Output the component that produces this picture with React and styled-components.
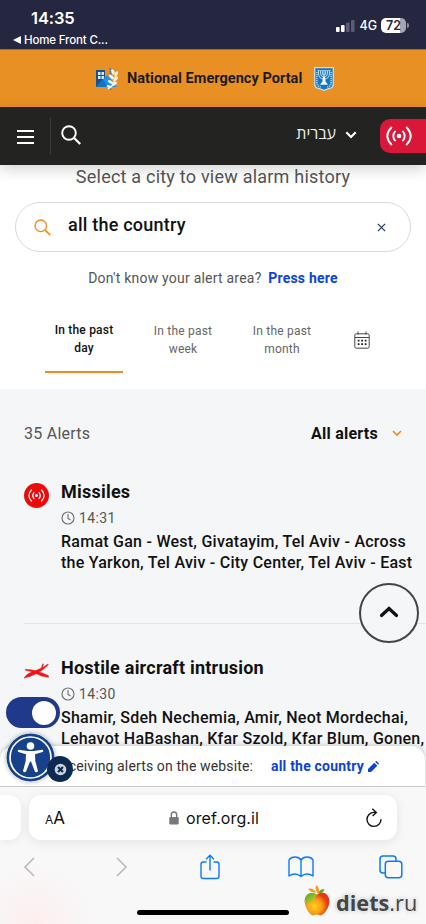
import styled, { createGlobalStyle } from 'styled-components'

const ORANGE = '#f28a1c'
const BLUE = '#0d42da'
const NAVY = '#21398b'
const IOS_BLUE = '#0a7aff'

const alerts = [
	{
		id: 1,
		type: 'missiles',
		title: 'Missiles',
		time: '14:31',
		lines: ['Ramat Gan - West, Givatayim, Tel Aviv - Across', 'the Yarkon, Tel Aviv - City Center, Tel Aviv - East']
	},
	{
		id: 2,
		type: 'aircraft',
		title: 'Hostile aircraft intrusion',
		time: '14:30',
		lines: ['Shamir, Sdeh Nechemia, Amir, Neot Mordechai,', 'Lehavot HaBashan, Kfar Szold, Kfar Blum, Gonen,']
	}
]

const ranges = [
	{ label: 'In the past', unit: 'day', active: true },
	{ label: 'In the past', unit: 'week' },
	{ label: 'In the past', unit: 'month' }
]

export default function App () {
	return (
		<Screen>
			<GlobalStyle />
			<StatusBar />
			<PortalBanner>
				<HomeFrontLogo />
				<BannerTitle>National Emergency Portal</BannerTitle>
				<StateEmblem />
			</PortalBanner>
			<NavBar />
			<Page>
				<Heading>Select a city to view alarm history</Heading>
				<SearchBox>
					<SearchIcon size={17} color={ORANGE} width={1.6} />
					<SearchValue>all the country</SearchValue>
					<svg width='9' height='9' viewBox='0 0 10 10'>
						<path d='M1 1l8 8M9 1L1 9' stroke='#1d3a5f' strokeWidth='1.3' />
					</svg>
				</SearchBox>
				<Hint>
					Don't know your alert area? <HintLink>Press here</HintLink>
				</Hint>
				<Tabs>
					{ranges.map(r => (
						<Tab key={r.unit} $active={r.active}>{r.label}<br />{r.unit}</Tab>
					))}
					<CalendarIcon />
				</Tabs>
				<Results>
					<ResultsHeader>
						<Count>35 Alerts</Count>
						<Filter>All alerts</Filter>
						<svg width='10' height='7' viewBox='0 0 10 7'>
							<path d='M1 1l4 4 4-4' fill='none' stroke={ORANGE} strokeWidth='1.6' />
						</svg>
					</ResultsHeader>
					{alerts.map(alert => <AlertItem key={alert.id} alert={alert} />)}
				</Results>
				<UpButton>
					<svg width='20' height='13' viewBox='0 0 20 13'>
						<path d='M2.5 10.5L10 3.5l7.5 7' fill='none' stroke='#111' strokeWidth='3.2' strokeLinecap='round' />
					</svg>
				</UpButton>
				<Receiving>
					<ReceivingText>Receiving alerts on the website:</ReceivingText>
					<ReceivingLink>all the country</ReceivingLink>
					<svg width='11' height='11' viewBox='0 0 11 11' fill={BLUE}>
						<path d='M0 8 6.3 1.7 9.300 4.700 3 11H0zM7.200.9l.6-.6q.5-.5 1 0l1.900 1.900q.5.5 0 1l-.6.6z' />
					</svg>
				</Receiving>
				<Toggle><Knob /></Toggle>
				<AccessButton><PersonIcon /></AccessButton>
				<CloseBadge>
					<svg width='13' height='13' viewBox='0 0 13 13'>
						<circle cx='6.5' cy='6.5' r='5.8' fill='#fff' opacity='.8' />
						<path d='M4 4l5 5M9 4l-5 5' stroke='#0d2b50' strokeWidth='2.2' />
					</svg>
				</CloseBadge>
			</Page>
			<BrowserBar />
		</Screen>
	)
}

function StatusBar () {
	return (
		<Status>
			<StatusLeft>
				<Clock>14:35</Clock>
				<BackLink>
					<svg width='8' height='8' viewBox='0 0 8 8'><path d='M0 4l8-4v8z' fill='#fff' /></svg>
					Home Front C...
				</BackLink>
			</StatusLeft>
			<StatusRight>
				<svg width='20' height='14' viewBox='0 0 20 14' fill='#fff'>
					<rect x='1' y='8' width='3.6' height='5' rx='1' />
					<rect x='6' y='6' width='3.6' height='7' rx='1' />
					<rect x='11' y='3.5' width='3.6' height='9.5' rx='1' opacity='.25' />
					<rect x='16' y='1' width='3.6' height='12' rx='1' opacity='.25' />
				</svg>
				<Network>4G</Network>
				<Battery>72</Battery>
				<BatteryTip />
			</StatusRight>
		</Status>
	)
}

function NavBar () {
	return (
		<Nav>
			<Burger><i /><i /><i /></Burger>
			<NavDivider />
			<SearchIcon size={20} color='#fff' width={1.9} />
			<Language lang='he'>עברית</Language>
			<svg width='12' height='8' viewBox='0 0 12 8'>
				<path d='M1.3 1.3L6 6l4.7-4.7' fill='none' stroke='#fff' strokeWidth='2.1' />
			</svg>
			<LiveButton><SignalIcon width={26} /></LiveButton>
		</Nav>
	)
}

function AlertItem ({ alert }) {
	return (
		<Item>
			<IconCell>
				{alert.type === 'missiles'
					? <MissileDot><SignalIcon width={17} /></MissileDot>
					: <AircraftIcon />}
			</IconCell>
			<div>
				<ItemTitle>{alert.title}</ItemTitle>
				<ItemTime>
					<svg width='14' height='14' viewBox='0 0 14 14' fill='none' stroke='#777' strokeWidth='1.2'>
						<circle cx='7' cy='7' r='6' />
						<path d='M7 3v4.3l2.5 1.6' />
					</svg>
					{alert.time}
				</ItemTime>
				{alert.lines.map(line => <Cities key={line}>{line}</Cities>)}
			</div>
		</Item>
	)
}

function BrowserBar () {
	return (
		<Browser>
			<AddressRow>
				<PreviousTab />
				<Address>
					<TextSize><small>A</small>A</TextSize>
					<Site>
						<svg width='10' height='14' viewBox='0 0 10 14'>
							<path d='M2.3 7V4a2.7 3 0 0 1 5.4 0v3' fill='none' stroke='#77777c' strokeWidth='1.4' />
							<rect x='.3' y='6' width='9.4' height='7.6' rx='1.3' fill='#77777c' />
						</svg>
						oref.org.il
					</Site>
					<svg width='18' height='20' viewBox='0 0 18 20' fill='none' stroke='#111' strokeWidth='1.4'>
						<path d='M11 4.4H9A7 7 0 1 0 16 11.3M7.3.8l4 3.6L7.6 8' />
					</svg>
				</Address>
				<NextTab />
			</AddressRow>
			<Toolbar>
				<ToolButton>
					<svg width='12' height='20' viewBox='0 0 12 20' fill='none' stroke='#b9b9bd' strokeWidth='1.6'>
						<path d='M11 1L2 10l9 9' />
					</svg>
				</ToolButton>
				<ToolButton $shift={2}>
					<svg width='12' height='20' viewBox='0 0 12 20' fill='none' stroke='#b9b9bd' strokeWidth='1.6'>
						<path d='M1 1l9 9-9 9' />
					</svg>
				</ToolButton>
				<ToolButton>
					<svg width='20' height='26' viewBox='0 0 20 26' fill='none' stroke={IOS_BLUE} strokeWidth='1.4'>
						<path d='M6.5 8H3.2Q1 8 1 10.2v12Q1 24.5 3.2 24.5h13.6q2.2 0 2.2-2.3v-12Q19 8 16.800 8h-3.300M10 16.500V1.500M6 5.300l4-4 4 4' />
					</svg>
				</ToolButton>
				<ToolButton>
					<svg width='26' height='22' viewBox='0 0 26 22' fill='none' stroke={IOS_BLUE} strokeWidth='1.4' strokeLinejoin='round'>
						<path d='M13 20.5V4Q11 1 7 1T1 3.8V20q3-2 6-2t6 2.5q3-2.5 6-2.5t6 2V3.8Q23 1 19 1t-6 3' />
					</svg>
				</ToolButton>
				<ToolButton>
					<svg width='24' height='24' viewBox='0 0 24 24' fill='none' stroke={IOS_BLUE} strokeWidth='1.5'>
						<path d='M6 18H4Q1 18 1 15V4Q1 1 4 1h10q3 0 3 3v2' />
						<rect x='6.3' y='6.3' width='16.5' height='16.5' rx='3' />
					</svg>
				</ToolButton>
			</Toolbar>
			<HomeIndicator />
			<Watermark>
				<AppleIcon />
				<WatermarkText><b>diets</b>.ru</WatermarkText>
			</Watermark>
		</Browser>
	)
}

function SearchIcon ({ size, color, width }) {
	return (
		<svg width={size} height={size} viewBox='0 0 20 20' fill='none' stroke={color} strokeWidth={width}>
			<circle cx='8' cy='8' r='6.8' />
			<path d='M12.8 12.8l6.4 6.2' strokeWidth={width * 1.2} />
		</svg>
	)
}

function SignalIcon ({ width }) {
	return (
		<svg width={width} height={width * 20 / 26} viewBox='0 0 26 20' fill='none' stroke='#fff' strokeWidth='1.9' strokeLinecap='round'>
			<circle cx='13' cy='10' r='2.3' fill='#fff' stroke='none' />
			<path d='M9 5.5q-3.4 4.5 0 9M17 5.5q3.4 4.5 0 9M5.3 1.5q-8 8.5 0 17M20.7 1.5q8 8.5 0 17' />
		</svg>
	)
}

function CalendarIcon () {
	return (
		<Calendar width='16' height='18' viewBox='0 0 16 18' fill='none' stroke='#444' strokeWidth='1'>
			<rect x='.8' y='2.8' width='14.4' height='14.4' rx='1.5' />
			<path d='M1 6.5h14M4 .5v3M12 .5v3' />
			<path d='M3.7 9.700h9M3.7 13.2h9' stroke='#222' strokeWidth='1.7' strokeDasharray='1.8 1.7' />
		</Calendar>
	)
}

function HomeFrontLogo () {
	return (
		<svg width='22' height='24' viewBox='0 0 22 24'>
			<path d='M0 3h9v17H0z' fill='#17528c' />
			<path d='M2 5h6v7H2z' fill='#dceaf5' />
			<path d='M5 5v7M2 8.5h6' stroke='#17528c' />
			<path d='M0 20L11 8l10 12z' fill='#1796f2' />
			<path d='M0 20L7 12l5 8z' fill='#1673c4' />
			<path d='M14.5 1v22' stroke='#5f83a5' strokeWidth='2' />
			<path d='M12 22q7-3 8-17' fill='none' stroke='#eef1f4' strokeWidth='1.5' />
			<g fill='#f4f3f0'>
				<ellipse cx='17' cy='5' rx='1.5' ry='3' transform='rotate(-25 17 5)' />
				<ellipse cx='20.5' cy='7' rx='1.2' ry='3' transform='rotate(25 20.5 7)' />
				<ellipse cx='15.5' cy='10' rx='1.5' ry='3.2' transform='rotate(-45 15.5 10)' />
				<ellipse cx='20' cy='12' rx='1.3' ry='3' transform='rotate(40 20 12)' />
				<ellipse cx='14.5' cy='15' rx='1.4' ry='3' transform='rotate(-60 14.5 15)' />
				<ellipse cx='18.5' cy='17' rx='1.3' ry='3' transform='rotate(55 18.5 17)' />
				<ellipse cx='13' cy='19.5' rx='1.2' ry='2.6' transform='rotate(-70 13 19.5)' />
			</g>
		</svg>
	)
}

function StateEmblem () {
	return (
		<svg width='20' height='24' viewBox='0 0 20 24'>
			<path d='M.7.7h18.6v16q0 4-4 4.800L10 23.300l-5.300-1.800q-4-.8-4-4.800z' fill='#1478bd' stroke='#c7dcea' strokeWidth='1.3' />
			<path d='M2.8 5v10q0 4 4 5M17.2 5v10q0 4-4 5' fill='none' stroke='#8cc0e2' strokeWidth='2' strokeDasharray='1.3 .7' />
			<g fill='none' stroke='#e6f1f8' strokeWidth='.8'>
				<path d='M4.5 4v2q0 6 5.5 6t5.5-6V4M6.5 4v2q0 4 3.5 4t3.5-4V4M8.3 4v2q0 2 1.7 2t1.7-2V4M10 3.5v13' />
			</g>
			<path d='M9 10h2l.6 4.5 2.4 3.3H6l2.400-3.300z' fill='#eef5fa' />
			<path d='M3.5 3.5h13' stroke='#d6e8f4' strokeDasharray='1.2 .8' />
		</svg>
	)
}

function AircraftIcon () {
	return (
		<svg width='25' height='16' viewBox='0 0 25 16' fill='#f01414' stroke='#f01414' strokeWidth='.4'>
			<path d='M.2 14.8Q2 11.2 9 8.600q5-1.800 8.200-3.600L18.700.7l.8.300-1 3.700 5.300-3.700.6.7-5.600 5Q12 11.200 6 13.400q-3.500.6-5.800 1.900z' />
			<path d='M1.3 6.300q6 .1 11 1.700 7 2 12.200 4.700v1.700q-7-.7-12.200-3.700T1.300 7.200z' />
		</svg>
	)
}

function PersonIcon () {
	return (
		<svg width='49' height='49' viewBox='0 0 49 49'>
			<circle cx='24.5' cy='24.5' r='24' fill='#17418d' />
			<circle cx='24.5' cy='24.5' r='20.5' fill='none' stroke='#fff' strokeWidth='1.7' />
			<circle cx='24.5' cy='13' r='3.8' fill='#fff' />
			<path d='M12.5 16.8l9 1.3h6l9-1.3q1.5 1.2 0 2.3l-7.500 2.200.3 6.700 2.700 10q-.7 2-3 .8l-4-10.300h-1l-4 10.300q-2.300 1.200-3-.8l2.700-10 .3-6.700-7.500-2.200q-1.500-1.100 0-2.300z' fill='#fff' />
		</svg>
	)
}

function AppleIcon () {
	return (
		<svg width='26' height='33' viewBox='0 0 27 33'>
			<defs>
				<radialGradient id='apple' cx='.38' cy='.6' r='.65'>
					<stop offset='0' stopColor='#ffd21c' />
					<stop offset='.5' stopColor='#f99a15' />
					<stop offset='.85' stopColor='#e23a16' />
				</radialGradient>
				<linearGradient id='green' x1='0' y1='0' x2='.8' y2='1'>
					<stop offset='0' stopColor='#4fa52b' />
					<stop offset='1' stopColor='#c5d32a' />
				</linearGradient>
			</defs>
			<path d='M13.5 10.5Q19 6 24 10.5q4.500 5.500 1 13T17 32q-3-1-3.500-1T9 32Q4 30 1.500 22T4 10Q9 7 13.500 10.500z' fill='url(#apple)' />
			<path d='M1.2 19Q0 13 4 10q5-3 9.500.5Q10 18 1.200 20z' fill='url(#green)' />
			<path d='M14 9.500Q11 4 12.500.3q4 3 3 9zM12.500 8Q8 9 4 4.500q5-1.500 8.500 3.500z' fill='#f59b1e' />
			<path d='M15.500 9Q15 5 21 4.500q0 4-5.500 4.500z' fill='#5aa928' />
		</svg>
	)
}

const GlobalStyle = createGlobalStyle`
	* { box-sizing: border-box; }
	body {
		margin: 0;
		font-family: Roboto, "Liberation Sans", sans-serif;
	}
	svg { display: block; flex: none; }
`

const Screen = styled.div`
	display: flex;
	flex-direction: column;
	width: 426px;
	height: 924px;
	overflow: hidden;
	background: #fff;
`

const Status = styled.div`
	display: flex;
	justify-content: space-between;
	height: 49px;
	flex: none;
	background: #25263f;
	color: #fff;
	font-family: Inter, sans-serif;
`

const StatusLeft = styled.div`
	padding: 8px 0 0 13px;
`

const Clock = styled.div`
	padding-left: 18px;
	font-size: 16.5px;
	line-height: 21px;
	font-weight: 600;
	letter-spacing: -0.1px;
`

const BackLink = styled.div`
	display: flex;
	align-items: center;
	gap: 3px;
	margin-top: 3px;
	font-size: 11.5px;
	line-height: 16px;
	font-weight: 500;
	letter-spacing: -0.15px;
`

const StatusRight = styled.div`
	display: flex;
	align-items: center;
	height: 51px;
	padding-right: 17px;
`

const Network = styled.span`
	margin: 0 4px 0 4px;
	font-size: 12.5px;
	font-weight: 500;
`

const Battery = styled.div`
	width: 25px;
	height: 15px;
	border-radius: 5px;
	background: linear-gradient(90deg, #fff 74%, #a5a5b0 74%);
	color: #25263f;
	font-size: 12.5px;
	line-height: 15px;
	font-weight: 600;
	text-align: center;
`

const BatteryTip = styled.div`
	width: 2px;
	height: 5px;
	margin-left: 1px;
	border-radius: 0 2px 2px 0;
	background: #8b8b98;
`

const PortalBanner = styled.div`
	display: flex;
	align-items: center;
	height: 58px;
	flex: none;
	padding-left: 96px;
	background: #e99024;
	border-top: 1px solid #a4692f;
`

const BannerTitle = styled.div`
	width: 176px;
	margin: -1px 11px 0 9px;
	color: #1c1c1c;
	font-size: 14.5px;
	font-weight: 700;
	letter-spacing: 0.04px;
	white-space: nowrap;
`

const Nav = styled.div`
	display: flex;
	align-items: center;
	position: relative;
	z-index: 1;
	height: 58px;
	flex: none;
	padding-left: 17px;
	background: #232321;
	box-shadow: 0 4px 14px rgba(0, 0, 0, 0.18);
	> svg { margin-top: -2px; }
`

const Burger = styled.div`
	display: grid;
	gap: 4px;
	width: 17px;
	margin-top: 2px;
	i { height: 2px; background: #fff; }
`

const NavDivider = styled.div`
	width: 1px;
	height: 36px;
	margin: 0 10px 0 16px;
	background: #3b3b3a;
`

const Language = styled.span`
	margin: -6px 9px 0 auto;
	color: #eee;
	font-family: "Open Sans", "Liberation Sans", sans-serif;
	font-size: 16px;
`

const LiveButton = styled.div`
	display: flex;
	align-items: center;
	width: 46px;
	height: 34px;
	margin-left: 23px;
	padding-left: 6px;
	border-radius: 10px 0 0 10px;
	background: #da1739;
`

const Page = styled.main`
	position: relative;
	flex: 1;
	min-height: 0;
	overflow: hidden;
`

const Heading = styled.h1`
	height: 37px;
	margin: 0;
	padding-top: 1px;
	color: #555;
	font-size: 18px;
	line-height: 22px;
	font-weight: 400;
	text-align: center;
	letter-spacing: 0.22px;
`

const SearchBox = styled.div`
	display: flex;
	align-items: center;
	height: 50px;
	margin: 0 15px;
	padding: 0 24px 0 18px;
	border: 1px solid #d9d9d9;
	border-radius: 25px;
`

const SearchValue = styled.span`
	flex: 1;
	padding: 0 0 5px 17px;
	font-size: 18px;
	font-weight: 500;
	color: #111;
	letter-spacing: 0.22px;
`

const Hint = styled.p`
	margin: 16px 0 0;
	color: #555;
	font-size: 14px;
	line-height: 20px;
	text-align: center;
	letter-spacing: 0.22px;
`

const HintLink = styled.a`
	margin-left: 3px;
	color: ${BLUE};
	font-weight: 700;
`

const Tabs = styled.div`
	display: flex;
	align-items: flex-start;
	gap: 21px;
	height: 101px;
	padding: 33px 0 0 45px;
`

const Tab = styled.div`
	width: 78px;
	height: 52px;
	padding-top: ${p => p.$active ? 1 : 2}px;
	border-bottom: 2px solid ${p => p.$active ? ORANGE : 'transparent'};
	color: ${p => p.$active ? '#111' : '#666'};
	font-size: 12px;
	line-height: 17.5px;
	font-weight: ${p => p.$active ? 500 : 400};
	text-align: center;
	letter-spacing: 0.2px;
`

const Calendar = styled.svg`
	margin: 10px 0 0 12px;
`

const Results = styled.section`
	height: 400px;
	padding-left: 24px;
	background: #f5f6f8;
`

const ResultsHeader = styled.div`
	display: flex;
	align-items: center;
	height: 91px;
	padding: 0 24px 2px 0;
	font-size: 16px;
`

const Count = styled.span`
	flex: 1;
	color: #555;
	letter-spacing: 0.25px;
`

const Filter = styled.span`
	margin-right: 14px;
	color: #111;
	font-weight: 700;
	letter-spacing: 0.25px;
`

const Item = styled.article`
	display: flex;
	height: 143px;
	& + & {
		padding-top: 32px;
		border-top: 1px solid #e2e3e5;
	}
`

const IconCell = styled.div`
	width: 37px;
	padding-top: 3px;
	> svg { margin-top: 4px; }
`

const MissileDot = styled.div`
	display: flex;
	align-items: center;
	justify-content: center;
	width: 25px;
	height: 25px;
	border-radius: 50%;
	background: #ee0a0a;
`

const ItemTitle = styled.h2`
	margin: 0;
	color: #111;
	font-size: 18px;
	line-height: 24px;
	font-weight: 700;
	letter-spacing: 0.23px;
`

const ItemTime = styled.div`
	display: flex;
	align-items: center;
	gap: 4px;
	height: 28px;
	color: #555;
	font-size: 14px;
	letter-spacing: 0.35px;
`

const Cities = styled.div`
	color: #111;
	font-size: 16px;
	line-height: 20.7px;
	font-weight: 500;
	white-space: nowrap;
	letter-spacing: 0.25px;
`

const UpButton = styled.div`
	position: absolute;
	top: 418px;
	right: 7px;
	display: flex;
	align-items: center;
	justify-content: center;
	width: 60px;
	height: 60px;
	padding-bottom: 4px;
	border: 2px solid #444;
	border-radius: 50%;
	background: #f5f6f8;
`

const Receiving = styled.div`
	position: absolute;
	left: 0;
	right: 1px;
	bottom: 0;
	display: flex;
	align-items: center;
	height: 41px;
	padding-left: 48px;
	border-bottom: 1px solid #c9c9c9;
	border-radius: 14px 14px 0 0;
	background: #fff;
	box-shadow: 0 -1px 5px rgba(0, 0, 0, 0.18);
	font-size: 14px;
`

const ReceivingText = styled.span`
	display: flex;
	justify-content: flex-end;
	width: 205px;
	color: #333;
	white-space: nowrap;
	letter-spacing: 0.13px;
`

const ReceivingLink = styled.a`
	margin: 0 4px 0 18px;
	color: ${BLUE};
	font-weight: 700;
	letter-spacing: 0.2px;
`

const Toggle = styled.div`
	position: absolute;
	top: 532px;
	left: 6px;
	display: flex;
	align-items: center;
	justify-content: flex-end;
	width: 54px;
	height: 31px;
	padding-right: 4px;
	border-radius: 16px;
	background: ${NAVY};
`

const Knob = styled.div`
	width: 24px;
	height: 24px;
	border-radius: 50%;
	background: #fff;
`

const AccessButton = styled.div`
	position: absolute;
	top: 568px;
	left: 6px;
	border-radius: 50%;
	box-shadow: 0 0 4px rgba(0, 0, 0, 0.3);
`

const CloseBadge = styled.div`
	position: absolute;
	top: 591px;
	left: 47px;
	display: flex;
	align-items: center;
	justify-content: center;
	width: 26px;
	height: 26px;
	border-radius: 50%;
	background: #0d2b50;
`

const Browser = styled.footer`
	position: relative;
	height: 137px;
	flex: none;
	padding-top: 8px;
	background: radial-gradient(circle at 35px 135px, #fdeeee 0, rgba(253, 240, 240, 0) 60px), #f8f8f9;
`

const AddressRow = styled.div`
	display: flex;
	justify-content: space-between;
	height: 45px;
`

const PreviousTab = styled.div`
	width: 21px;
	border-radius: 0 12px 12px 0;
	background: #fff;
	box-shadow: 0 2px 10px rgba(0, 0, 0, 0.07);
`

const NextTab = styled.div`
	width: 21px;
`

const Address = styled.div`
	display: flex;
	align-items: center;
	justify-content: space-between;
	width: 368px;
	padding: 0 14px 0 16px;
	border-radius: 12px;
	background: #fff;
	box-shadow: 0 2px 12px rgba(0, 0, 0, 0.09);
	font-family: Inter, sans-serif;
	color: #111;
`

const TextSize = styled.span`
	font-size: 17px;
	small { font-size: 12px; }
`

const Site = styled.span`
	display: flex;
	align-items: center;
	gap: 7px;
	padding-right: 2px;
	font-size: 16px;
	letter-spacing: 0.1px;
`

const Toolbar = styled.div`
	display: flex;
	align-items: center;
	justify-content: space-between;
	height: 53px;
	padding: 0 22px 0 16px;
`

const ToolButton = styled.div`
	display: flex;
	justify-content: center;
	width: 26px;
	padding-left: ${p => (p.$shift || 0) * 2}px;
`

const HomeIndicator = styled.div`
	width: 152px;
	height: 5px;
	margin: 17px auto 0;
	border-radius: 3px;
	background: #000;
`

const Watermark = styled.div`
	position: absolute;
	left: 304px;
	bottom: 7px;
	display: flex;
	align-items: center;
`

const WatermarkText = styled.span`
	margin: 5px 0 0 6px;
	color: #444;
	font-family: "Open Sans", sans-serif;
	font-size: 21.7px;
	line-height: 24px;
	text-shadow: 0 0 2px #fff, 0 0 4px #aaa;
	b { font-weight: 700; }
`
